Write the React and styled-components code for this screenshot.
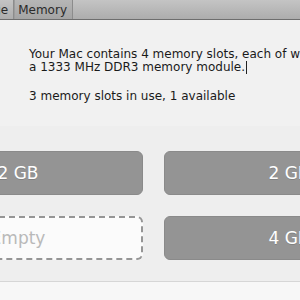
import React from "react";
import styled, { createGlobalStyle } from "styled-components";

const Global = createGlobalStyle`
  html, body { margin: 0; padding: 0; background: #eeeeee; overflow: hidden; }
  body { font-family: "Lucida Grande", "DejaVu Sans", sans-serif; }
`;

const Window = styled.div`
  width: 580px;
  margin-left: -130px;
  height: 300px;
  display: flex;
  flex-direction: column;
  background: #eeeeee;
`;

const TabBar = styled.div`
  height: 19px;
  display: flex;
  justify-content: flex-end;
  padding-right: 377px;
  background: linear-gradient(#c4c4c4, #adadad);
  border-bottom: 1px solid #6e6e6e;
  box-shadow: 0 1px 0 #d9d9d9;
`;

const Tab = styled.div`
  display: flex;
  align-items: center;
  padding: 0 5px 0 4px;
  font-size: 12px;
  color: #2a2a2a;
  border-left: 1px solid #8c8c8c;
  background: ${(p) => (p.$active ? "linear-gradient(#b6b6b6, #a4a4a4)" : "transparent")};
  box-shadow: ${(p) => (p.$active ? "inset 1px 0 0 #9c9c9c" : "none")};
  &:last-child { border-right: 1px solid #8c8c8c; }
`;

const Info = styled.div`
  padding: 28px 0 0 159px;
  background: #f1f1f1;
  font-size: 12px;
  color: #1a1a1a;
  line-height: 13px;
  height: 106px;
  box-sizing: border-box;
`;

const Para = styled.p`
  margin: 0 0 16px 0;
  white-space: nowrap;
`;

const Caret = styled.span`
  display: inline-block;
  width: 1px;
  height: 13px;
  background: #222;
  vertical-align: -3px;
  margin-left: 1px;
`;

const SlotGrid = styled.div`
  display: grid;
  grid-template-columns: 250px 250px;
  grid-auto-rows: 44px;
  column-gap: 21px;
  row-gap: 21px;
  padding: 25px 0 0 23px;
  flex: 1;
`;

const Slot = styled.div`
  box-sizing: border-box;
  border-radius: 6px;
  display: flex;
  align-items: center;
  justify-content: center;
  font-size: 17px;
  background: ${(p) => (p.$empty ? "#fbfbfb" : "#949494")};
  border: ${(p) => (p.$empty ? "2px dashed #959595" : "1px solid #8a8a8a")};
  color: ${(p) => (p.$empty ? "#b9b9b9" : "#ffffff")};
  text-shadow: ${(p) => (p.$empty ? "none" : "0 1px 0 rgba(0,0,0,0.15)")};
`;

const Footer = styled.div`
  height: 18px;
  background: #f7f7f7;
  border-top: 1px solid #d6d6d6;
`;

export default function App() {
  return (
    <>
      <Global />
      <Window>
        <TabBar>
          <Tab>Overview</Tab>
          <Tab>Displays</Tab>
          <Tab>Storage</Tab>
          <Tab $active>Memory</Tab>
        </TabBar>
        <Info>
          <Para>
            Your Mac contains 4 memory slots, each of which can accept
            <br />
            a 1333 MHz DDR3 memory module.<Caret />
          </Para>
          <Para>3 memory slots in use, 1 available</Para>
        </Info>
        <SlotGrid>
          <Slot>2 GB</Slot>
          <Slot>2 GB</Slot>
          <Slot $empty>Empty</Slot>
          <Slot>4 GB</Slot>
        </SlotGrid>
        <Footer />
      </Window>
    </>
  );
}
